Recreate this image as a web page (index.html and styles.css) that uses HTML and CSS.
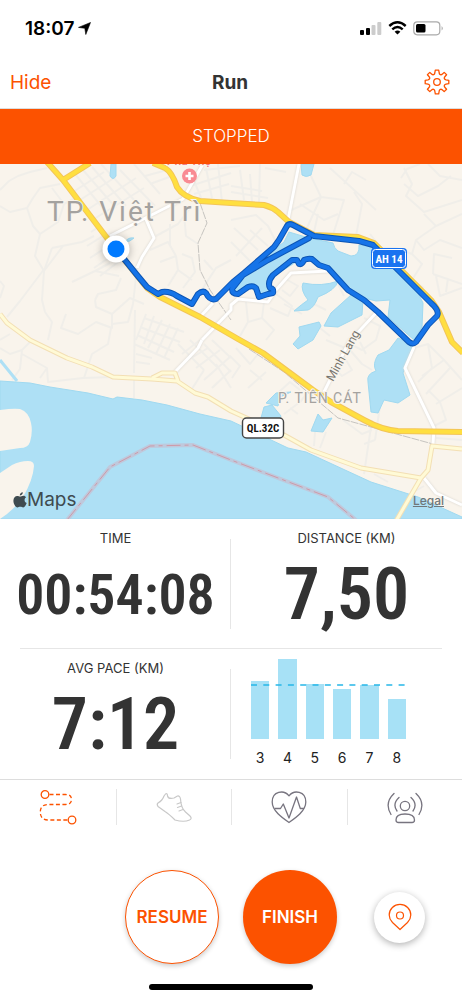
FILE: index.html
```html
<!DOCTYPE html>
<html lang="en">
<head>
  <meta charset="UTF-8">
  <meta name="viewport" content="width=device-width, initial-scale=1.0">
  <title>Run</title>
  <link rel="stylesheet" href="styles.css">
</head>
<body>
  <div class="status-bar">
    <div class="status-time">
      <span>18:07</span>
      <svg width="13" height="13" viewBox="0 0 13 13"><path d="M12.5 .5 L7.8 12.5 L6.8 6.3 L.5 5.4 Z" fill="#000" stroke="#000" stroke-width=".6" stroke-linejoin="round"/></svg>
    </div>
    <div class="status-icons">
      <svg width="22" height="14" viewBox="0 0 22 14">
        <rect x="0" y="9" width="4" height="5" rx="1"/>
        <rect x="6" y="7" width="4" height="7" rx="1"/>
        <rect x="11.500" y="4" width="4" height="10" rx="1" fill="#ccc"/>
        <rect x="17.300" y="1" width="4" height="13" rx="1" fill="#ccc"/>
      </svg>
      <svg width="19" height="14" viewBox="0 0 19 14">
        <g fill="none" stroke="#000" stroke-width="2.400">
          <path d="M1.300 5 Q9.500 -2.400 17.700 5"/>
          <path d="M4.300 8.300 Q9.500 3.600 14.700 8.300"/>
        </g>
        <path d="M6.600 10.700 Q9.500 8.500 12.400 10.700 L9.500 13.600 Z"/>
      </svg>
      <svg width="31" height="15" viewBox="0 0 31 15">
        <rect x=".8" y=".8" width="26" height="13" rx="3.500" fill="none" stroke="#aaa" stroke-width="1.200"/>
        <rect x="3" y="3" width="9.500" height="8.600" rx="1.500"/>
        <path d="M28.600 5 Q31 7.300 28.600 9.600 Z" fill="#aaa"/>
      </svg>
    </div>
  </div>

  <header class="nav-bar">
    <a class="nav-hide" href="#">Hide</a>
    <h1>Run</h1>
    <button class="nav-settings" aria-label="Settings">
      <svg width="26" height="26" viewBox="0 0 26 26" fill="none" stroke="#fc5200" stroke-width="1.300" stroke-linejoin="round">
        <path d="M11.300 1.200 H14.700 L15.200 4 Q15.700 6.200 17.600 5.600 Q18.600 5 20.200 3.400 L22.600 5.800 Q21 7.400 20.400 8.400 Q19.800 10.300 22 10.800 L24.800 11.300 V14.700 L22 15.200 Q19.800 15.700 20.400 17.600 Q21 18.600 22.600 20.200 L20.200 22.600 Q18.600 21 17.600 20.400 Q15.700 19.800 15.200 22 L14.700 24.800 H11.300 L10.800 22 Q10.300 19.800 8.400 20.400 Q7.400 21 5.800 22.600 L3.400 20.200 Q5 18.600 5.600 17.600 Q6.200 15.700 4 15.200 L1.200 14.700 V11.300 L4 10.800 Q6.200 10.300 5.600 8.400 Q5 7.400 3.400 5.800 L5.800 3.400 Q7.400 5 8.400 5.600 Q10.300 6.200 10.800 4 Z"/>
        <circle cx="13" cy="13" r="3.300"/>
      </svg>
    </button>
  </header>

  <div class="banner">STOPPED</div>

  <div class="map">
    <svg class="map-canvas" viewBox="0 0 462 355">
      <rect width="462" height="355" fill="#f9f4ec"/>

      <!-- minor streets -->
      <g class="street">
        <path d="M0 26 L9 17 L18 12 L30 8 L47 4 M0 42 L10 48 L27 44 L33 34 L40 24 L60 20 M27 44 L33 62 L40 70 L35 92 L44 107 L42 136 L45 148"/>
        <path d="M40 70 L58 58 L64 40 L75 34 M64 40 L52 24 M52 84 L82 78 L94 72 M52 84 L45 104 L20 137 L7 153 M0 117 L4 122 L0 134 M44 107 L63 82"/>
        <path d="M0 184 L10 190 L22 186 L30 178 M22 186 L20 205 L12 216 M22 190 L47 204 L48 218 L83 214 L113 213 M47 204 L40 214 M10 170 L0 176 M84 214 L92 190 L108 180 L111 164"/>
        <path d="M45 148 L52 158 L48 176 M72 118 L95 107 L119 112 M95 107 L110 99 M95 136 L98 130 L116 126 L121 114 M95 136 L96 143 L112 150 L130 134 L144 140 M66 150 L61 164 L78 170 L96 158 L112 164 L112 150 M137 104 L133 140 L128 158 L112 160"/>
        <path d="M75 10 L106 48 M83 6 L116 44 M92 3 L126 42 M101 0 L136 38 M73 28 L104 8 M80 36 L114 14 M87 46 L136 14 M94 55 L144 24 M120 6 L155 42 M134 0 L160 30 M145 12 L167 6 M150 20 L172 12 M91 68 L100 62 L126 98 M87 82 L106 70 M90 94 L113 79 M94 104 L120 86 M100 112 L126 92"/>
        <path d="M192 12 L202 36 M206 4 L212 34 M218 0 L222 38 M190 22 L231 9 M194 30 L229 20 M204 6 L240 2 M231 22 L262 27 M231 28 L268 34 M240 6 L244 36 M250 10 L252 38 M260 0 L259 38 M265 4 L286 8"/>
        <path d="M146 150 L136 176 M154 152 L144 180 M162 156 L148 184 M170 160 L156 190 M178 164 L164 194 M144 154 L184 168 M140 163 L180 178 M137 171 L174 188 M134 180 L170 196 M135 146 L134 209 M136 190 L152 194 M136 198 L150 200 M134 215 V234"/>
        <path d="M160 98 L176 92 L178 106 L192 116 M176 92 L168 78 L150 86 M178 106 L168 122 M183 124 L195 108 L192 94 L182 90 M156 72 L178 60 L190 44 M170 60 L170 82 M184 50 L186 72 L198 80 M203 124 L216 104 L231 96 M213 106 L204 96"/>
        <path d="M231 56 L256 51 L268 62 L276 78 M231 78 L250 97 M234 64 L258 86 M236 92 L262 64 M250 66 L268 82 M289 47 L321 33 L344 36 L332 74 M321 33 L306 66 M300 40 L324 56 L338 50 M354 28 L362 40 L356 72 M310 10 L321 33 M330 4 L376 46 M344 20 L352 8 L366 16 M314 68 L318 50"/>
        <path d="M404 20 L418 32 L438 22 L451 12 M404 4 L412 20 L406 32 L424 48 L462 36 M428 0 L440 12 L462 16 M401 14 L407 5 L420 0 M462 50 L436 62 L416 76 L412 90 L396 84 L381 84 L370 70 M436 62 L424 50 M416 76 L424 86 L440 76 L462 84 M412 90 L422 100 L412 116 L424 124 M433 110 L462 120 M433 110 L434 90 L452 94 M436 112 L440 132 L462 124 M448 114 L446 128"/>
        <path d="M284 114 L298 122 L290 132 L282 126 M276 130 L292 142 L288 152 L270 144 M264 138 L262 154 L274 166 L266 176 M246 138 L248 158 L240 172 M248 158 L262 154 M284 140 L302 150 M338 120 L344 132 M314 140 L326 146 M320 164 L330 172 M364 154 L380 162 L376 176 L362 186 L350 180"/>
        <path d="M178 180 L204 206 M190 176 L218 204 M204 180 L231 208 M212 176 L231 194 M188 196 L208 184 M196 204 L220 186 M204 216 L231 192 M212 224 L231 206 M204 206 L190 228 M216 200 L231 224 M182 190 L200 176"/>
        <path d="M232 214 L240 202 L230 192 M250 206 L262 216 M248 224 L266 208 M236 184 L250 200 L258 190 M270 236 L290 218 L300 226 M284 250 L300 238 L310 226 M290 244 L298 250 M326 176 L350 186 L362 200 L372 206 M340 186 L352 206 L342 212 L334 204 M360 178 L366 190 M372 256 L364 310 M380 242 L375 276 M375 276 L364 280 M343 256 L362 270 L372 266 M315 268 L314 282 M326 268 L320 284 M374 310 L388 318"/>
        <path d="M414 184 L428 180 L444 196 L462 216 M428 180 L432 204 L418 218 M444 196 L422 212 M450 204 L426 230 M462 224 L436 240 M434 262 L446 256 L440 238 L428 226 M436 274 L462 276 M410 330 L424 322"/>
      </g>

      <!-- water -->
      <g class="water">
        <path d="M0 217 L30 219 L50 223 L88 229 L113 235 L117 233 L142 236 L167 241 L200 250 L231 257 L288 284 L306 288 L371 318 L418 333 L462 353 V355 H0 Z"/>
        <path d="M284 78 L289 68 L309 74 L333 79 Q334 84 338 87 L351 92 Q360 92 359 81 L374 83 L398 108 Q408 110 413 119 L423 139 L422 163 L414 176 L388 153 L390 136 L376 137 L364 134 L346 126 L328 104 L309 95 L296 98 L271 114 L268 129 L258 131 L251 123 L236 129 L233 123 L245 108 Z"/>
        <path d="M303 119 Q322 123 338 117 Q336 126 318 133 Q314 144 308 146 L294 147 Q302 140 308 136 Q300 126 303 119 Z"/>
        <path d="M351 131 L363 136 L362 151 L348 158 L338 163 L324 162 L331 149 Z"/>
        <path d="M299 163 L319 158 L321 162 L313 176 L298 185 L293 180 L300 172 Z"/>
        <path d="M398 174 L389 186 L378 191 Q372 200 376 207 Q366 210 368 218 L371 248 L378 249 L384 236 L398 239 L410 231 L403 209 L413 181 Z"/>
        <path d="M276 229 L266 239 L278 242 L280 233 L291 228 Z M264 243 L272 241 L281 252 L276 262 L261 254 Z M318 250 L323 256 L332 254 L323 268 L311 267 Z"/>
        <path d="M301 0 H314 L311 11 Q306 14 302 11 Z M111 0 H116 L116 12 Q113 17 110 12 Z M125 78 Q128 73 134 74 Q130 78 125 78 Z"/>
      </g>
      <path d="M0 196 L17 217" fill="none" stroke="#aee0f5" stroke-width="3"/>
      <path d="M0 246 Q14 244 20 245 Q29 248 31 259 Q33 268 30 278 Q28 284 20 284 L0 287 Z M0 309 L12 301 Q20 297 28 297 Q34 297 34 302 Q33 316 23 333 Q14 346 0 355 Z" fill="#f9f4ec"/>

      <!-- province border -->
      <path class="border-glow" d="M67 356 L110 303 L150 282 L193 281 L231 296 L328 333 L356 356"/>
      <path class="border-line" d="M67 356 L110 303 L150 282 L193 281 L231 296 L328 333 L356 356"/>

      <!-- railway -->
      <path class="rail" d="M200 39 L207 59 L198 79 L200 106 L210 126 L231 156 M249 185 L284 208 L338 254 L433 280"/>

      <!-- roads -->
      <g class="road-local">
        <path d="M110 72 L183 35 L203 0"/>
        <path d="M145 53 L154 74 L142 93 L137 104"/>
        <path d="M299 0 L288 56"/>
        <path d="M200 153 L213 139 M202 176 L231 146 V141 L238 135 L268 138 L276 126 L291 109 L328 107"/>
        <path d="M376 149 L349 178 L324 228"/>
        <path d="M414 183 L405 204 L434 264 L433 280"/>
        <path d="M424 314 L436 329 L462 341"/>
        <path d="M175 208 L198 184 L202 176"/>
      </g>
      <path class="road-edge-pale" d="M0 150 L7 159 L30 176 L67 194 L92 203 L113 213 L152 215 L177 217 L195 229 L208 233 L231 247 L284 271 L311 286 L361 304 L421 314 L428 306 L432 282 L462 285 M421 314 L396 357 M152 214 L162 209 L175 209 L178 217"/>
      <path class="road-pale" d="M0 150 L7 159 L30 176 L67 194 L92 203 L113 213 L152 215 L177 217 L195 229 L208 233 L231 247 L284 271 L311 286 L361 304 L421 314 L428 306 L432 282 L462 285 M421 314 L396 357 M152 214 L162 209 L175 209 L178 217"/>
      <g class="road-edge-main">
        <path d="M47 -2 L63 16 L107 74 L147 124 L160 133 L200 153 L238 175 L263 189 L313 226 L331 238 L364 256 Q382 266 398 267 L462 268 M63 16 L90 -1"/>
        <path d="M153 -1 L165 4 Q172 8 177 23 Q183 33 200 37 L231 39 L264 41 Q272 43 278 48 L289 58 L314 71 L358 73 L374 79 L431 136 L439 148 L452 178 L463 189"/>
      </g>
      <g class="road-main">
        <path d="M47 -2 L63 16 L107 74 L147 124 L160 133 L200 153 L238 175 L263 189 L313 226 L331 238 L364 256 Q382 266 398 267 L462 268 M63 16 L90 -1"/>
        <path d="M153 -1 L165 4 Q172 8 177 23 Q183 33 200 37 L231 39 L264 41 Q272 43 278 48 L289 58 L314 71 L358 73 L374 79 L431 136 L439 148 L452 178 L463 189"/>
      </g>

      <!-- place names -->
      <text class="place place-city" x="47" y="57">TP. Việt Trì</text>
      <text class="place place-ward" x="278" y="239">P. TIÊN CÁT</text>
      <text class="place place-street" transform="translate(333 218) rotate(-61)">Minh Lang</text>
      <text class="place place-poi" x="189" y="1">Phú Thọ</text>
      <circle cx="189.500" cy="12" r="7.500" fill="#f98b93"/>
      <path d="M189.500 8 V16 M185.500 12 H193.500" stroke="#fff" stroke-width="2.600"/>

      <!-- recorded route -->
      <path class="route-edge" d="M116 85 L137 111 L147 123 L158 130 L162 128 Q170 127 177 132 L192 140 L198 130 Q203 126 206 129 Q210 137 216 135 L233 118 L244 109 L274 83 L279 76 L287 62 Q289 59 293 61 L314 72 L359 77 L373 81 L398 106 L431 139 Q440 147 437 152 L428 161 L416 178 Q413 181 409 178 L378 148 L364 136 L348 126 L328 104 L319 101 L312 95 Q308 94 304 96 Q302 101 299 100 L297 96 L292 96 L273 111 Q267 118 270 124 Q274 124 273 129 L268 130 L259 133 L256 124 Q253 121 248 123 L238 130 Q232 130 232 125 L243 111 L268 96 L309 74"/>
      <path class="route" d="M116 85 L137 111 L147 123 L158 130 L162 128 Q170 127 177 132 L192 140 L198 130 Q203 126 206 129 Q210 137 216 135 L233 118 L244 109 L274 83 L279 76 L287 62 Q289 59 293 61 L314 72 L359 77 L373 81 L398 106 L431 139 Q440 147 437 152 L428 161 L416 178 Q413 181 409 178 L378 148 L364 136 L348 126 L328 104 L319 101 L312 95 Q308 94 304 96 Q302 101 299 100 L297 96 L292 96 L273 111 Q267 118 270 124 Q274 124 273 129 L268 130 L259 133 L256 124 Q253 121 248 123 L238 130 Q232 130 232 125 L243 111 L268 96 L309 74"/>

      <!-- current position -->
      <g class="position">
        <circle cx="116" cy="85" r="13.500" fill="#fff"/>
        <circle cx="116" cy="85" r="8.500" fill="#007aff"/>
      </g>

      <!-- road shields -->
      <rect x="371" y="84" width="36" height="21" rx="4" fill="#1a73f0"/>
      <rect x="372.500" y="85.500" width="33" height="18" rx="3" fill="none" stroke="#fff"/>
      <text class="shield" x="389" y="99" fill="#fff">AH 14</text>
      <rect x="242.500" y="254" width="41" height="20" rx="4" fill="#fff" stroke="#444" stroke-width="1.400"/>
      <text class="shield" x="263" y="268" fill="#111">QL.32C</text>
    </svg>
    <div class="map-brand">
      <svg width="14" height="16" viewBox="0 0 14 16" fill="#3f4b50">
        <path d="M7 4.500 C8 4.500 8.800 3.700 10.300 3.700 C11.500 3.700 12.500 4.300 13.200 5.200 C10.800 6.600 11.200 10 13.700 11 C12.900 13 11.700 15.400 10.200 15.400 C9.100 15.400 8.600 14.800 7.300 14.800 C6 14.800 5.400 15.400 4.400 15.400 C2.700 15.400 .4 12 .4 8.700 C.4 5.600 2.300 3.900 4.200 3.900 C5.400 3.900 6.300 4.500 7 4.500 Z M6.800 3.600 C6.700 1.900 8.200 .4 9.800 .3 C10 2 8.500 3.600 6.800 3.600 Z"/>
      </svg>
      <span>Maps</span>
    </div>
    <a class="map-legal" href="#">Legal</a>
  </div>

  <main class="metrics">
    <section class="metric">
      <h2>TIME</h2>
      <div class="value value-time">00:54:08</div>
    </section>
    <section class="metric">
      <h2>DISTANCE (KM)</h2>
      <div class="value">7,50</div>
    </section>
    <section class="metric">
      <h2>AVG PACE (KM)</h2>
      <div class="value">7:12</div>
    </section>
    <section class="metric splits">
      <div class="bars">
        <div class="bar" style="height: 58px"></div>
        <div class="bar" style="height: 80px"></div>
        <div class="bar" style="height: 55px"></div>
        <div class="bar" style="height: 50px"></div>
        <div class="bar" style="height: 54px"></div>
        <div class="bar" style="height: 40px"></div>
        <svg class="average" height="2"><line x1="0" y1="1" x2="100%" y2="1" stroke="#27b7e8" stroke-width="1.300" stroke-dasharray="6 6.300"/></svg>
      </div>
      <div class="bar-labels">
        <span>3</span><span>4</span><span>5</span><span>6</span><span>7</span><span>8</span>
      </div>
    </section>
  </main>

  <nav class="tabs">
    <button aria-label="Route">
      <svg width="38" height="36" viewBox="0 0 38 36" fill="none" stroke="#fc5200" stroke-width="1.300">
        <circle cx="6" cy="5.500" r="3.800"/>
        <circle cx="33" cy="31" r="3.800"/>
        <path stroke-dasharray="4 2.500" d="M10.500 5.500 H26.500 Q32.500 5.500 32.500 10.500 Q32.500 15.500 26.500 15.500 H9.500 Q1.300 15.500 1.300 23 Q1.300 31 9.500 31 H28.500"/>
      </svg>
    </button>
    <button aria-label="Shoes">
      <svg width="38" height="36" viewBox="0 0 38 36" fill="none" stroke="#c8c8c8" stroke-width="1.200" stroke-linecap="round" stroke-linejoin="round">
        <path d="M10.500 5 Q12.500 3.800 12.500 7 Q13.500 10.500 19 9 L22.500 7 Q25 6.600 25.500 10 Q26 19 30.500 23 L35 27 Q37.500 29.500 34.500 31 Q29 33.500 20 31 Q14 25 10 22.500 L3 17.500 Q1.500 15 3 14 Q7.500 11.500 9 7 Z"/>
        <path d="M22 15 L26 13.500 M22.500 18.500 L26.500 17 M24 22 L28 20.500"/>
      </svg>
    </button>
    <button aria-label="Heart rate">
      <svg width="38" height="36" viewBox="0 0 38 36" fill="none" stroke="#77747f" stroke-width="1.300" stroke-linejoin="round">
        <path d="M19 6.800 C14 .5 2.200 2 2.200 13 C2.200 22 12.500 29 19 33.500 C25.500 29 35.800 22 35.800 13 C35.800 2 24 .5 19 6.800 Z"/>
        <path d="M4.500 19.500 H10.500 L13.300 15 L19 29 L26.500 8 L30.300 19.500 H34"/>
      </svg>
    </button>
    <button aria-label="Beacon">
      <svg width="38" height="36" viewBox="0 0 38 36" fill="none" stroke="#77747f" stroke-width="1.300" stroke-linecap="round">
        <circle cx="19" cy="17" r="4.700"/>
        <path d="M10 31 Q10 25 19 25 Q28.500 25 28.500 31 Q28.500 33.500 26 33.500 H12.500 Q10 33.500 10 31 Z"/>
        <path d="M13 8.500 Q6 15 11 22 M25 8.500 Q32 15 27 22 M8 4.500 Q-2 14 5 25.500 M30 4.500 Q40 14 33 25.500"/>
      </svg>
    </button>
  </nav>

  <footer class="actions">
    <button class="round resume">RESUME</button>
    <button class="round finish">FINISH</button>
    <div class="locate-cell">
      <button class="locate" aria-label="Location">
        <svg width="24" height="28" viewBox="0 0 24 28" fill="none" stroke="#fc5200" stroke-width="1.200" stroke-linejoin="round">
          <path d="M12 26.500 L4.500 19.500 Q1.200 16 1.200 12 A10.800 10.600 0 0 1 22.800 12 Q22.800 16 19.500 19.500 Z"/>
          <circle cx="12" cy="12.500" r="3.500"/>
        </svg>
      </button>
    </div>
  </footer>
  <div class="home-indicator"></div>
</body>
</html>
```
FILE: styles.css
```css
* {
  box-sizing: border-box;
}
body {
  margin: 0;
  background: #fff;
  color: #333;
  font-family: Inter, "Liberation Sans", sans-serif;
}
button {
  padding: 0;
  border: none;
  background: none;
  font-family: inherit;
  cursor: pointer;
}
svg {
  display: block;
}
h1,
h2 {
  margin: 0;
}

/* status bar */
.status-bar {
  display: flex;
  justify-content: space-between;
  align-items: center;
  height: 56px;
  padding: 0 18px 0 25px;
}
.status-time {
  display: flex;
  align-items: center;
  gap: 4px;
  color: #000;
  font-size: 19px;
  font-weight: 600;
}
.status-icons {
  display: flex;
  align-items: center;
  gap: 6px;
}

/* nav bar */
.nav-bar {
  display: grid;
  grid-template-columns: 1fr auto 1fr;
  align-items: center;
  height: 53px;
  padding: 0 12px 0 10px;
  border-bottom: 1px solid #ddd;
}
.nav-hide {
  color: #fc5200;
  font-size: 19px;
  text-decoration: none;
}
.nav-bar h1 {
  font-size: 19px;
  font-weight: 700;
}
.nav-settings {
  justify-self: end;
}

.banner {
  height: 55px;
  background: #fc5200;
  color: #fff;
  font-size: 17px;
  font-weight: 300;
  line-height: 55px;
  text-align: center;
}

/* map */
.map {
  position: relative;
}
.map-canvas {
  width: 100%;
  height: auto;
}
.street {
  fill: none;
  stroke: #f0eee9;
  stroke-width: 2;
  stroke-linejoin: round;
}
.water {
  fill: #aee0f5;
  stroke: #a0d9f0;
  stroke-width: 1;
}
.border-glow {
  fill: none;
  stroke: #bfc9dc;
  stroke-width: 4;
}
.border-line {
  fill: none;
  stroke: #cf9aa8;
  stroke-width: 1;
  stroke-dasharray: 14 4 4 4;
}
.rail {
  fill: none;
  stroke: #c6c4c0;
  stroke-width: 1;
  stroke-dasharray: 8 1;
}
.road-local,
.road-pale,
.road-edge-pale,
.road-main,
.road-edge-main {
  fill: none;
  stroke-linejoin: round;
}
.road-local {
  stroke: #fff;
  stroke-width: 3;
  filter: drop-shadow(0 0 1px #d5d2cc);
}
.road-edge-pale {
  stroke: #f3dfb4;
  stroke-width: 5;
}
.road-pale {
  stroke: #fffad6;
  stroke-width: 3;
}
.road-edge-main {
  stroke: #f3c558;
  stroke-width: 6;
}
.road-main {
  stroke: #ffdf40;
  stroke-width: 4;
}
.place {
  fill: #a4a29f;
  stroke: #f9f4ec;
  stroke-width: 2;
  paint-order: stroke;
  font-family: Roboto, sans-serif;
}
.place-city {
  font-size: 28px;
  letter-spacing: 2px;
}
.place-ward {
  font-size: 14px;
  letter-spacing: 1px;
}
.place-street {
  fill: #77746f;
  font-size: 12px;
}
.place-poi {
  fill: #ee7580;
  font-size: 12px;
  font-weight: 500;
  text-anchor: middle;
}
.route,
.route-edge {
  fill: none;
  stroke-linejoin: round;
  stroke-linecap: round;
}
.route-edge {
  stroke: #0c55b5;
  stroke-width: 6;
}
.route {
  stroke: #1674e8;
  stroke-width: 4;
}
.position {
  filter: drop-shadow(0 1px 4px rgba(0, 0, 0, 0.3));
}
.shield {
  font-family: "Roboto Condensed", Roboto, sans-serif;
  font-size: 11px;
  font-weight: 700;
  text-anchor: middle;
}
.map-brand {
  position: absolute;
  left: 13px;
  bottom: 7px;
  display: flex;
  align-items: center;
  color: #3f4b50;
  font-size: 19px;
  line-height: 24px;
}
.map-legal {
  position: absolute;
  right: 18px;
  bottom: 11px;
  color: #70777a;
  font-size: 12px;
  font-weight: 500;
}

/* metrics */
.metrics {
  display: grid;
  grid-template-columns: repeat(2, minmax(0, 1fr));
  position: relative;
}
.metrics::after {
  content: "";
  position: absolute;
  top: 129px;
  left: 20px;
  right: 20px;
  height: 1px;
  background: #e6e6e6;
}
.metric {
  height: 130px;
  padding-top: 10px;
  text-align: center;
}
.metric:nth-child(odd) {
  background: linear-gradient(#e6e6e6, #e6e6e6) right center / 1px 90px no-repeat;
}
.metric h2 {
  font-size: 13px;
  font-weight: 400;
  line-height: 18px;
}
.value {
  font-family: "Roboto Condensed", Roboto, sans-serif;
  font-size: 72px;
  font-weight: 600;
  line-height: 96px;
}
.value-time {
  font-size: 56px;
}
.splits {
  padding: 10px 56px 0 20px;
}
.bars {
  position: relative;
  display: grid;
  grid-template-columns: repeat(6, 1fr);
  gap: 9px;
  align-items: end;
  height: 80px;
}
.bar {
  background: #a7e1f6;
}
.average {
  position: absolute;
  left: 0;
  bottom: 53px;
  width: 100%;
}
.bar-labels {
  display: grid;
  grid-template-columns: repeat(6, 1fr);
  gap: 9px;
  margin-top: 9px;
  color: #222;
  font-size: 14px;
  line-height: 20px;
}

/* tabs */
.tabs {
  display: grid;
  grid-template-columns: repeat(4, 1fr);
  padding: 9px 0;
  border-top: 1px solid #ddd;
}
.tabs button {
  display: flex;
  justify-content: center;
  align-items: center;
  height: 36px;
}
.tabs button + button {
  border-left: 1px solid #e6e6e6;
}

/* actions */
.actions {
  display: grid;
  grid-template-columns: 1fr 94px 94px 1fr;
  gap: 24px;
  align-items: center;
  padding-top: 36px;
}
.round {
  height: 94px;
  border-radius: 50%;
  font-size: 17px;
  font-weight: 600;
  box-shadow: 0 2px 5px rgba(0, 0, 0, 0.2);
}
.resume {
  grid-column: 2;
  border: 1px solid #fc5200;
  background: #fff;
  color: #fc5200;
}
.finish {
  background: #fc5200;
  color: #fff;
}
.locate-cell {
  display: flex;
  justify-content: center;
  padding-right: 24px;
}
.locate {
  display: flex;
  justify-content: center;
  align-items: center;
  width: 51px;
  height: 51px;
  border-radius: 50%;
  background: #fff;
  box-shadow: 0 2px 7px rgba(0, 0, 0, 0.3);
}
.home-indicator {
  width: 164px;
  height: 6px;
  margin: 20px auto 10px;
  border-radius: 3px;
  background: #000;
}
```
